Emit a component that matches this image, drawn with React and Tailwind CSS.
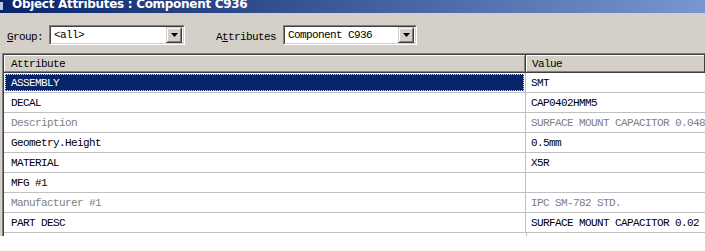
import React from "react";

const rows = [
  { name: "ASSEMBLY", value: "SMT", selected: true },
  { name: "DECAL", value: "CAP0402HMM5" },
  { name: "Description", value: "SURFACE MOUNT CAPACITOR 0.048 UF", inherited: true },
  { name: "Geometry.Height", value: "0.5mm" },
  { name: "MATERIAL", value: "X5R" },
  { name: "MFG #1", value: "" },
  { name: "Manufacturer #1", value: "IPC SM-782 STD.", inherited: true },
  { name: "PART DESC", value: "SURFACE MOUNT CAPACITOR 0.02 UF" },
];

const mono = { fontFamily: '"Liberation Mono", "DejaVu Sans Mono", monospace' };

function Combo({ text, width }) {
  return (
    <div
      className="h-[20px] border border-t-[#808080] border-l-[#808080] border-b-white border-r-white"
      style={{ width }}
    >
      <div className="flex h-full items-center border border-t-[#404040] border-l-[#404040] border-b-[#d4d0c8] border-r-[#d4d0c8] bg-white">
        <span className="flex-1 pl-[3px] pt-[1px] text-[11px] tracking-[-0.6px] text-black">{text}</span>
        <div className="mr-[1px] flex h-[16px] w-[16px] items-center justify-center border border-t-[#d4d0c8] border-l-[#d4d0c8] border-b-[#404040] border-r-[#404040] bg-[#d4d0c8]">
          <div className="flex h-full w-full items-center justify-center border border-t-white border-l-white border-b-[#808080] border-r-[#808080]">
            <svg width="7" height="4" viewBox="0 0 7 4">
              <path d="M0 0h7L3.5 4z" fill="#000" />
            </svg>
          </div>
        </div>
      </div>
    </div>
  );
}

export default function App() {
  return (
    <div className="h-[251px] w-[705px] overflow-hidden bg-white" style={mono}>
      <div className="flex h-[236px] flex-col bg-[#d4d0c8]">
        {/* title bar, top of it is cut off */}
        <div className="flex h-[13px] shrink-0 items-start overflow-hidden bg-gradient-to-r from-[#0a246a] to-[#7897d0]">
          <div className="mt-[2px] h-[8px] w-[3px] bg-[#b8c8e8]" />
          <span
            className="-mt-[3px] ml-[9px] whitespace-nowrap text-[12px] font-bold leading-[14px] text-white"
            style={{ fontFamily: '"DejaVu Sans", "Liberation Sans", sans-serif', letterSpacing: "-0.3px" }}
          >
            Object Attributes : Component C936
          </span>
        </div>

        {/* toolbar */}
        <div className="flex h-[40px] shrink-0 items-start pt-[12px] text-[11px] tracking-[-0.6px] text-black">
          <span className="ml-[7px] mt-[4px] w-[42px]">
            <u>G</u>roup:
          </span>
          <Combo text="<all>" width={136} />
          <span className="ml-[31px] mt-[4px] w-[67px]">
            A<u>t</u>tributes
          </span>
          <Combo text="Component C936" width={134} />
        </div>

        {/* table */}
        <div className="ml-[2px] flex-1 overflow-hidden border-l border-t border-[#808080]">
          <div className="h-full border-l border-t border-[#404040] bg-white">
            <div className="flex h-[18px] bg-[#d4d0c8] text-[11px] tracking-[-0.6px] text-black">
              <div className="w-[522px] shrink-0 border-b border-r border-[#404040]">
                <div className="flex h-full items-center border-b border-r border-l border-t border-b-[#808080] border-r-[#808080] border-l-white border-t-white pl-[6px] pt-[1px]">
                  Attribute
                </div>
              </div>
              <div className="min-w-0 flex-1 border-b border-r border-[#404040]">
                <div className="flex h-full items-center border-b border-l border-t border-b-[#808080] border-l-white border-t-white pl-[5px] pt-[1px]">
                  Value
                </div>
              </div>
            </div>
            {rows.map((row) => (
              <div
                key={row.name}
                className={
                  "flex h-[20px] border-b border-[#c0c0c0] text-[11px] tracking-[-0.6px] " +
                  (row.inherited ? "text-[#808080]" : "text-black")
                }
              >
                <div className="w-[522px] shrink-0 border-r border-[#c0c0c0] p-[1px]">
                  {row.selected ? (
                    <div className="flex h-full items-center border border-dotted border-[#e8e4a8] bg-[#0a246a] pl-[5px] pt-[1px] text-white">
                      {row.name}
                    </div>
                  ) : (
                    <div className="flex h-full items-center pl-[6px] pt-[1px]">{row.name}</div>
                  )}
                </div>
                <div className="flex min-w-0 flex-1 items-center overflow-hidden whitespace-nowrap pl-[5px] pt-[1px]">
                  {row.value}
                </div>
              </div>
            ))}
            <div className="ml-[522px] h-[4px] w-px bg-[#c0c0c0]" />
          </div>
        </div>
      </div>
    </div>
  );
}
